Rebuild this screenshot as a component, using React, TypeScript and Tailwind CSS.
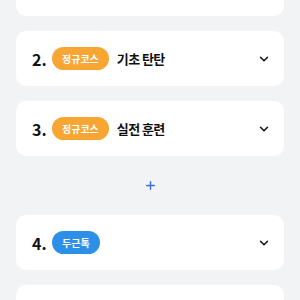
import React from 'react';
import { ChevronDown, Plus } from 'lucide-react';

type Item = { no: number; badge: string; color: string; title?: string };

const items: Item[] = [
  { no: 1, badge: '정규코스', color: 'bg-[#f7a634]', title: '기본 다지기' },
  { no: 2, badge: '정규코스', color: 'bg-[#f7a634]', title: '기초 탄탄' },
  { no: 3, badge: '정규코스', color: 'bg-[#f7a634]', title: '실전 훈련' },
];

const items2: Item[] = [
  { no: 4, badge: '두근톡', color: 'bg-[#2d90e8]' },
  { no: 5, badge: '스페셜코스', color: 'bg-[#1f69a8]' },
];

const Card = ({ item }: { item: Item }) => (
  <div className="flex h-[55px] shrink-0 items-center rounded-[10px] bg-white pl-4 pr-[13px]">
    <span className="w-[20px] text-[16px] leading-none font-bold text-[#111]">{item.no}.</span>
    <span
      className={`${item.color} flex h-[23px] items-center rounded-full px-[10px] text-[10px] leading-none font-semibold text-white`}
    >
      {item.badge}
    </span>
    {item.title && (
      <span className="ml-2 text-[13px] leading-none font-bold tracking-[-0.6px] text-[#111]">
        {item.title}
      </span>
    )}
    <ChevronDown size={14} strokeWidth={2.6} className="ml-auto text-[#111]" />
  </div>
);

export default function App() {
  return (
    <div
      className="h-[300px] w-[300px] overflow-hidden bg-[#f2f3f5] px-4"
      style={{ fontFamily: '"Noto Sans CJK KR", "Noto Sans", sans-serif' }}
    >
      <div className="-mt-[39px] flex flex-col gap-[15px]">
        {items.map((it) => (
          <Card key={it.no} item={it} />
        ))}
        <div className="flex h-[29px] shrink-0 items-center justify-center">
          <Plus size={13} strokeWidth={2.6} className="text-[#3b6fd8]" />
        </div>
        {items2.map((it) => (
          <Card key={it.no} item={it} />
        ))}
      </div>
    </div>
  );
}
